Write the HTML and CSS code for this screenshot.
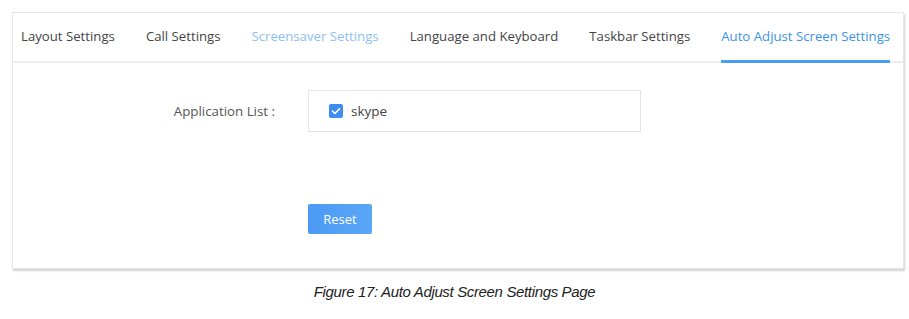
FILE: index.html
```html
<!DOCTYPE html>
<html>
<head>
<meta charset="utf-8">
<link rel="stylesheet" href="styles.css">
</head>
<body>
<div class="page">
  <div class="card">
    <div class="tabs">
      <div class="tab">Layout Settings</div>
      <div class="tab">Call Settings</div>
      <div class="tab hover">Screensaver Settings</div>
      <div class="tab">Language and Keyboard</div>
      <div class="tab">Taskbar Settings</div>
      <div class="tab active">Auto Adjust Screen Settings</div>
    </div>
    <div class="content">
      <div class="row">
        <div class="label">Application List :</div>
        <div class="listbox">
          <span class="check"><svg width="14" height="14" viewBox="0 0 14 14"><rect width="14" height="14" rx="2" fill="#3d8ef0"/><path d="M3.5 7.2 L6 9.5 L10.5 4.8" fill="none" stroke="#fff" stroke-width="1.6" stroke-linecap="round" stroke-linejoin="round"/></svg></span>
          <span class="item">skype</span>
        </div>
      </div>
      <div class="actions">
        <button class="btn">Reset</button>
      </div>
    </div>
  </div>
  <div class="caption">Figure 17: Auto Adjust Screen Settings Page</div>
</div>
</body>
</html>
```
FILE: styles.css
```css
html, body { margin: 0; padding: 0; background: #fff; }
.page { padding: 12px 5px 0 12px; font-family: "Open Sans", sans-serif; }
.card {
  width: 890px;
  border: 1px solid #e6e6e6;
  box-shadow: 1px 2px 2px rgba(0,0,0,0.18);
  background: #fff;
}
.tabs {
  display: flex;
  gap: 31px;
  padding-left: 8px;
  border-bottom: 2px solid #ececec;
  height: 48px;
}
.tab {
  font-size: 13.2px;
  color: #444;
  line-height: 46px;
  height: 48px;
  box-sizing: border-box;
  white-space: nowrap;
  margin-bottom: -2px;
}
.tab.hover { color: #8ec0f3; }
.tab.active { color: #3d92ea; border-bottom: 3px solid #4a9df0; height: 50px; }
.content { padding: 27px 0 34px 0; }
.row { display: flex; align-items: center; }
.label {
  width: 262px;
  text-align: right;
  font-size: 13.3px;
  color: #555;
  margin-right: 33px;
}
.listbox {
  width: 333px;
  height: 42px;
  border: 1px solid #e4e4e4;
  display: flex;
  align-items: center;
  padding-left: 20px;
  box-sizing: border-box;
}
.check { display: flex; width: 14px; height: 14px; margin-right: 8px; }
.item { font-size: 13.5px; color: #444; }
.actions { padding-left: 295px; margin-top: 72px; }
.btn {
  width: 64px;
  height: 30px;
  border: none;
  border-radius: 2px;
  background: linear-gradient(90deg, #4c9af5, #5aa6f7);
  color: #fff;
  font-family: "Open Sans", sans-serif;
  font-size: 13px;
  padding: 0;
}
.caption {
  text-align: center;
  width: 885px;
  margin-top: 14px;
  font-family: "Liberation Sans", sans-serif;
  font-style: italic;
  font-size: 15px;
  color: #222;
  letter-spacing: -0.35px;
}
```
